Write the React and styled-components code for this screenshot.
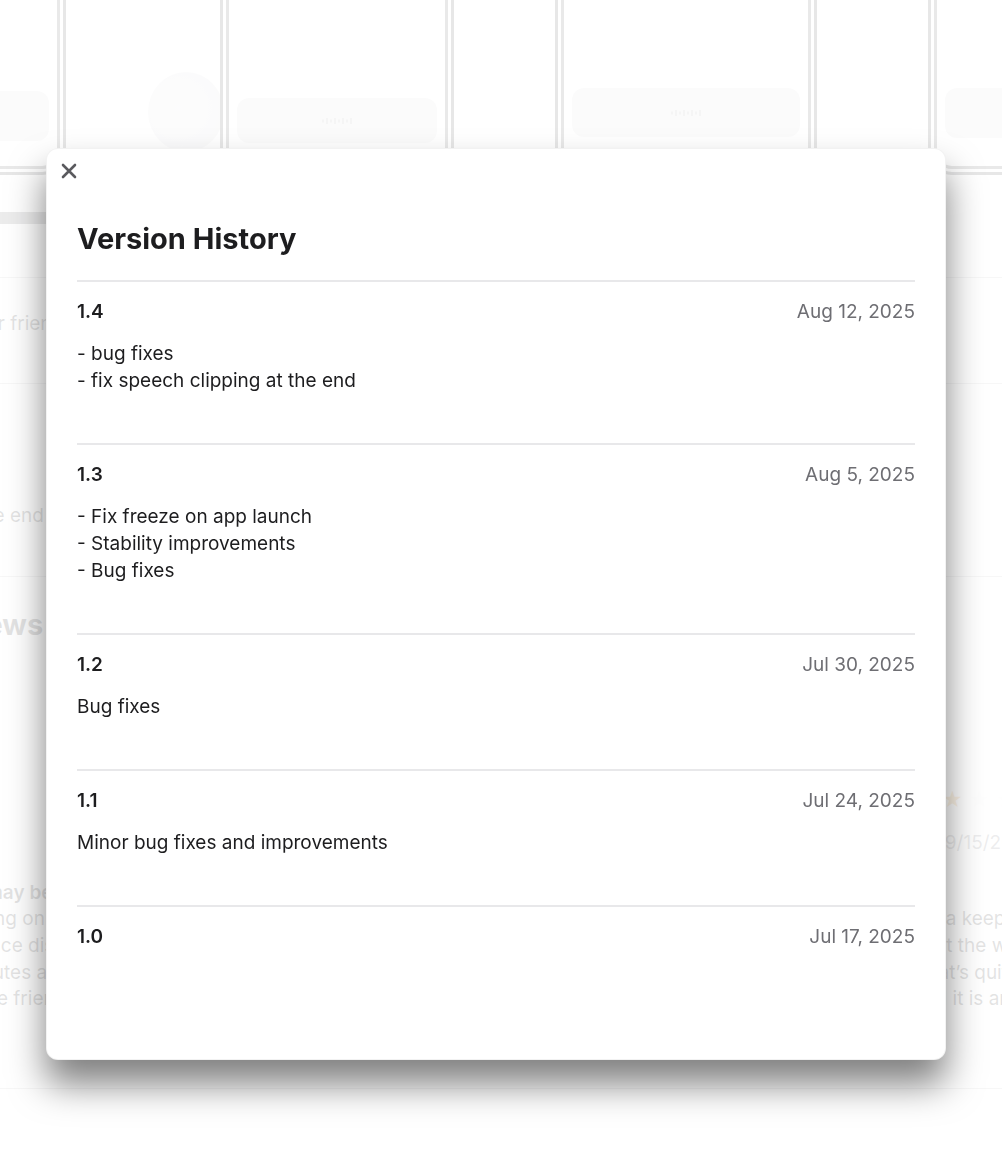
import React from 'react';
import styled, { createGlobalStyle } from 'styled-components';

const GlobalStyle = createGlobalStyle`
  html, body {
    margin: 0;
    padding: 0;
    overflow: hidden;
    background: #fff;
  }
  body {
    font-family: Inter, "Noto Sans", "Liberation Sans", sans-serif;
    color: #1d1d1f;
    -webkit-font-smoothing: antialiased;
  }
  * { box-sizing: border-box; }
`;

const versions = [
  { v: '1.4', date: 'Aug 12, 2025', notes: '- bug fixes\n- fix speech clipping at the end' },
  { v: '1.3', date: 'Aug 5, 2025', notes: '- Fix freeze on app launch\n- Stability improvements\n- Bug fixes' },
  { v: '1.2', date: 'Jul 30, 2025', notes: 'Bug fixes' },
  { v: '1.1', date: 'Jul 24, 2025', notes: 'Minor bug fixes and improvements' },
  { v: '1.0', date: 'Jul 17, 2025', notes: '' },
];

const reviews = [
  {
    stars: 5,
    author: 'marta.k',
    date: '9/20/2025',
    title: 'I think that this one really may be the best',
    body: 'I use it every day now, relying on it for most chats\nIt handles noises and distance distortion well\nTranslations come out, minutes after I finish\nRecommended it to all of the friends I met',
  },
  {
    stars: 4,
    author: 'jlee',
    date: '9/18/2025',
    title: 'Works well',
    body: 'Simple and quick. I wish there were more voices\nto pick from but it does the job for short talks.',
  },
  {
    stars: 2,
    author: 'Bo',
    date: '9/15/2025',
    title: '',
    body: 'Data keeps stopping halfway through\nIsn’t the whole point to talk freely?\nThat’s quite annoying since\nStill it is an otherwise good app.',
  },
];

/* ---------- background app page ---------- */

const Page = styled.div`
  width: 100%;
  height: 1155px;
  overflow: hidden;
`;

const Strip = styled.div`
  display: flex;
  align-items: flex-start;
  height: 195px;
  margin-top: -20px;
  margin-left: -190px;
`;

const Frame = styled.div`
  flex: none;
  width: ${(p) => p.$w}px;
  height: 195px;
  margin-left: ${(p) => p.$gap || 0}px;
  border: 3px solid #3a3a3c;
  border-radius: 0 0 24px 24px;
  box-shadow: inset 0 0 0 3px #fff, inset 0 0 0 6px #48484a;
  padding: ${(p) => p.$boxTop}px 14px 0;
  background: #fff;
`;

const FrameBox = styled.div`
  height: ${(p) => p.$h}px;
  border-radius: 12px;
  background: #dcdcde;
  display: flex;
  align-items: center;
  justify-content: center;
`;

const Bubble = styled.div`
  flex: none;
  width: 76px;
  height: 80px;
  margin: 92px -4px 0 82px;
  border-radius: 50%;
  background: radial-gradient(circle at 40% 45%, #e6e6e8, #d9d9db);
`;

const Content = styled.div`
  width: 1800px;
  margin-left: -249px;
`;

const Track = styled.div`
  height: 12px;
  width: 640px;
  margin-top: 37px;
  border-radius: 6px;
  background: #626266;
`;

const Section = styled.section`
  border-top: 1px solid #b8b8bd;
  padding: ${(p) => p.$pad};
`;

const BgTitle = styled.h2`
  margin: 0;
  font-size: 29px;
  line-height: 34px;
  font-weight: 700;
`;

const BgText = styled.p`
  margin: ${(p) => p.$m || 0};
  font-size: 19px;
  line-height: 27px;
  white-space: pre-line;
`;

const BgRow = styled.div`
  display: flex;
  gap: 16px;
  font-size: 19px;
  line-height: 22px;
  margin-top: 7px;
  color: #6e6e73;
`;

const ReviewGrid = styled.div`
  display: grid;
  grid-template-columns: 575px 575px 575px;
  column-gap: 7px;
  margin-top: 148px;
`;

const ReviewCard = styled.div`
  display: flex;
  flex-direction: column;
  font-size: 19px;
`;

const Stars = styled.div`
  font-size: 20px;
  line-height: 20px;
  letter-spacing: 6px;
`;

const Star = styled.span`
  color: ${(p) => (p.$on ? '#e8a23a' : '#f0f0f0')};
`;

const Meta = styled.div`
  display: flex;
  gap: 6px;
  margin-top: 23px;
  line-height: 20px;
  color: #6e6e73;
`;

const ReviewTitle = styled.div`
  margin-top: 27px;
  min-height: 26px;
  line-height: 26px;
  font-weight: 600;
`;

const ReviewBody = styled.p`
  margin: 0;
  line-height: 26.8px;
  white-space: pre-line;
`;

/* ---------- modal ---------- */

const Backdrop = styled.div`
  position: fixed;
  inset: 0;
  background: rgba(255, 255, 255, 0.88);
  display: flex;
  align-items: flex-start;
  padding: 148px 0 0 46px;
`;

const Modal = styled.div`
  width: 900px;
  height: 912px;
  background: #fff;
  border-radius: 12px;
  border: 1px solid rgba(0, 0, 0, 0.05);
  box-shadow: 0 24px 36px rgba(0, 0, 0, 0.5);
  overflow: hidden;
  display: flex;
  flex-direction: column;
`;

const CloseButton = styled.button`
  width: 20px;
  height: 20px;
  margin: 12px 0 0 12px;
  padding: 0;
  border: 0;
  background: none;
  display: flex;
  align-items: center;
  justify-content: center;
  cursor: pointer;
`;

const Body = styled.div`
  padding: 0 30px;
`;

const Title = styled.h1`
  margin: 41px 0 24px;
  font-size: 29px;
  line-height: 34px;
  font-weight: 700;
  color: #1d1d1f;
`;

const Item = styled.div`
  border-top: 2px solid #e8e8ea;
  padding: 20px 0 49.5px;
`;

const ItemHead = styled.div`
  display: flex;
  justify-content: space-between;
  align-items: center;
  line-height: 20px;
  font-size: 19px;
`;

const Version = styled.span`
  font-weight: 600;
  color: #1d1d1f;
`;

const DateText = styled.span`
  color: #6e6e73;
`;

const Notes = styled.p`
  margin: 17.5px 0 0;
  font-size: 19px;
  line-height: 27px;
  color: #1d1d1f;
  white-space: pre-line;
`;

const Wave = () => (
  <svg width="30" height="8" viewBox="0 0 30 8">
    {[1, 5, 9, 13, 17, 21, 25, 29].map((x, i) => (
      <line key={x} x1={x} x2={x} y1={i % 2 ? 1 : 2.5} y2={i % 2 ? 7 : 5.5} stroke="#8e8e93" strokeWidth="1.3" />
    ))}
  </svg>
);

const CloseIcon = () => (
  <svg width="16" height="16" viewBox="0 0 16 16">
    <path d="M2 2 L14 14 M14 2 L2 14" stroke="#5a5a5e" strokeWidth="2.6" strokeLinecap="round" />
  </svg>
);

export default function App() {
  return (
    <>
      <GlobalStyle />
      <Page>
        <Strip>
          <Frame $w={256} $boxTop={108}>
            <FrameBox $h={50} />
          </Frame>
          <Bubble />
          <Frame $w={234} $boxTop={115}>
            <FrameBox $h={45}>
              <Wave />
            </FrameBox>
          </Frame>
          <Frame $w={262} $gap={101} $boxTop={105}>
            <FrameBox $h={49}>
              <Wave />
            </FrameBox>
          </Frame>
          <Frame $w={234} $gap={111} $boxTop={105}>
            <FrameBox $h={50} />
          </Frame>
        </Strip>
        <Content>
          <Track />
          <Section $pad="32px 0 0" style={{ marginTop: 53 }}>
            <BgText>Speak and translate for your friends instantly, in more than forty languages.</BgText>
          </Section>
          <Section $pad="23px 0 47px" style={{ marginTop: 46 }}>
            <BgTitle>What’s New</BgTitle>
            <BgRow>
              <span>Version 1.4</span>
              <span>Aug 12, 2025</span>
            </BgRow>
            <BgText $m="5px 0 0 14px">{'- bug fixes\n- fix speech clipping at the end'}</BgText>
          </Section>
          <Section $pad="31px 0 0">
            <BgTitle>Ratings and Reviews</BgTitle>
            <ReviewGrid>
              {reviews.map((r) => (
                <ReviewCard key={r.date}>
                  <Stars>
                    {[0, 1, 2, 3, 4].map((i) => (
                      <Star key={i} $on={i < r.stars}>★</Star>
                    ))}
                  </Stars>
                  <Meta>
                    <span>{r.author}</span>
                    <span>{r.date}</span>
                  </Meta>
                  <ReviewTitle>{r.title}</ReviewTitle>
                  <ReviewBody>{r.body}</ReviewBody>
                </ReviewCard>
              ))}
            </ReviewGrid>
          </Section>
          <Section $pad="0" style={{ marginTop: 75 }} />
        </Content>
      </Page>

      <Backdrop>
        <Modal role="dialog" aria-label="Version History">
          <CloseButton aria-label="Close">
            <CloseIcon />
          </CloseButton>
          <Body>
            <Title>Version History</Title>
            {versions.map((item) => (
              <Item key={item.v}>
                <ItemHead>
                  <Version>{item.v}</Version>
                  <DateText>{item.date}</DateText>
                </ItemHead>
                {item.notes && <Notes>{item.notes}</Notes>}
              </Item>
            ))}
          </Body>
        </Modal>
      </Backdrop>
    </>
  );
}
